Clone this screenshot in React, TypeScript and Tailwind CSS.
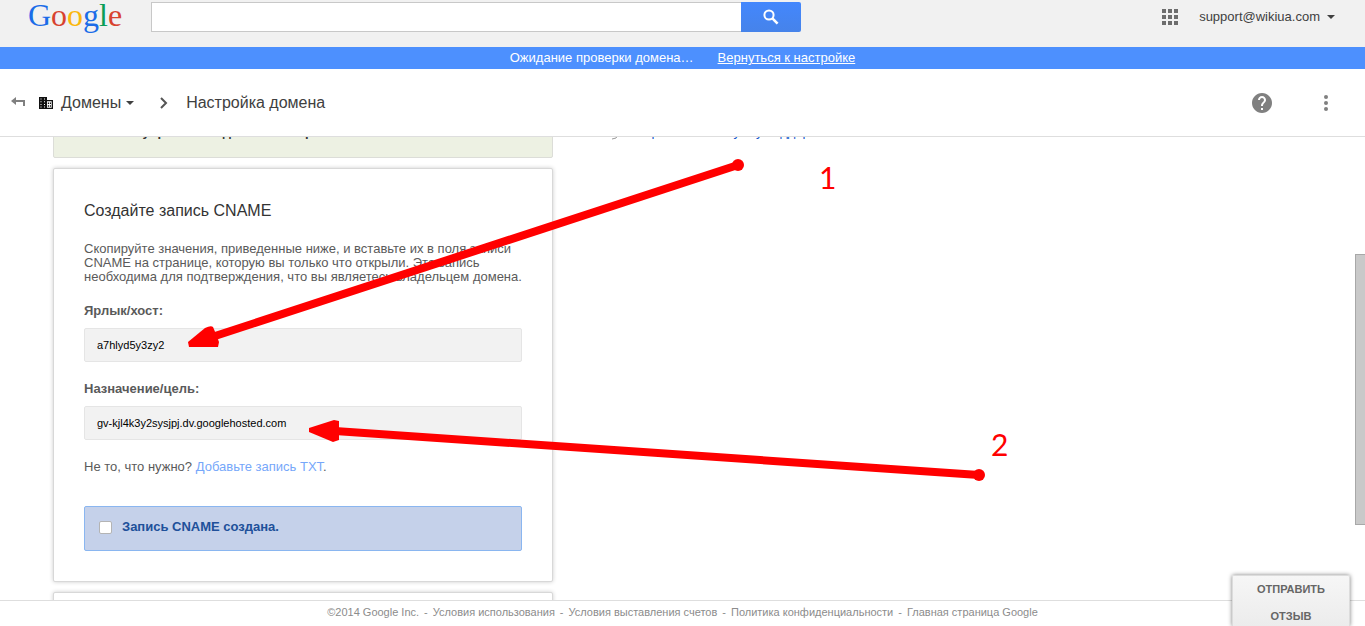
import type { ReactNode } from 'react';

const footerLinks = [
  'Условия использования',
  'Условия выставления счетов',
  'Политика конфиденциальности',
  'Главная страница Google',
];

const gridRows = [0, 6, 12];

function Caret({ className }: { className?: string }) {
  return (
    <svg width="8" height="4" viewBox="0 0 8 4" className={className} aria-hidden="true">
      <path d="M0 0h8L4 4z" fill="currentColor" />
    </svg>
  );
}

function GoogleLogo() {
  return (
    <a
      href="#"
      aria-label="Google"
      className="flex w-[123px] font-['Liberation_Serif',serif] text-[32px] leading-[26px]"
    >
      <span className="text-[#1b6ce8]">G</span>
      <span className="text-[#d8432f]">o</span>
      <span className="text-[#fbb70c]">o</span>
      <span className="text-[#1b6ce8]">g</span>
      <span className="text-[#0a9d57]">l</span>
      <span className="text-[#d8432f]">e</span>
    </a>
  );
}

function Header() {
  return (
    <header className="flex items-start bg-[#f1f1f1] pt-[2px] pr-[30px] pb-[15px] pl-7">
      <GoogleLogo />
      <form className="flex h-[30px] w-[650px]">
        <input
          type="text"
          aria-label="Поиск"
          className="min-w-0 flex-1 border border-r-0 border-[#c8c8c8] bg-white px-2 text-base outline-none"
        />
        <button
          type="button"
          aria-label="Найти"
          className="flex w-[60px] items-center justify-center rounded-r-xs bg-linear-to-b from-[#4387fd] to-[#4683ea]"
        >
          <svg width="16" height="16" viewBox="0 0 16 16" fill="none" stroke="#fff" aria-hidden="true">
            <circle cx="6" cy="6" r="4.6" strokeWidth="2" />
            <path d="M9.4 9.4l5.2 5.2" strokeWidth="2.6" />
          </svg>
        </button>
      </form>
      <div className="ml-auto flex h-[30px] items-center">
        <button type="button" aria-label="Приложения" className="mr-[21px]">
          <svg width="16" height="16" viewBox="0 0 16 16" fill="#6d6d6d" aria-hidden="true">
            {gridRows.map((y) => gridRows.map((x) => <rect key={`${x}-${y}`} x={x} y={y} width="4" height="4" />))}
          </svg>
        </button>
        <button type="button" className="flex items-center text-[13px] text-[#404040]">
          support@wikiua.com
          <Caret className="ml-[7px]" />
        </button>
      </div>
    </header>
  );
}

function Breadcrumbs() {
  return (
    <nav className="flex h-[68px] items-center border-b border-[#dedede] pr-[37px] pl-[11px] text-base text-[#404040]">
      <button type="button" aria-label="Назад">
        <svg width="14" height="12" viewBox="0 0 14 12" fill="#808080" aria-hidden="true">
          <path d="M0 4l5-4v3h9v6h-2V5H5v3z" />
        </svg>
      </button>
      <button type="button" className="ml-[14px] flex items-center">
        <svg width="14" height="12" viewBox="0 0 14 12" aria-hidden="true">
          <path d="M0 0h8v3h6v9H0z" fill="#111" />
          <path
            d="M1.5 1.5h1v1h-1zM5 1.5h1v1H5zM1.5 4.2h1v1h-1zM5 4.2h1v1H5zM1.5 7h1v1h-1zM5 7h1v1H5zM1.5 9.6h1v1h-1zM5 9.6h1v1H5zM8 4.3h4.7v6.4H8z"
            fill="#fff"
          />
          <path d="M8.8 5.6h1.4V7H8.8zM11 5.6h1V7h-1zM8.8 8.3h1.4v1.4H8.8zM11 8.3h1v1.4h-1z" fill="#111" />
        </svg>
        <span className="ml-2">Домены</span>
        <Caret className="ml-[5px]" />
      </button>
      <svg width="8" height="12" viewBox="0 0 8 12" fill="none" stroke="#555" strokeWidth="2" className="ml-[26px]" aria-hidden="true">
        <path d="M1 1l5 5-5 5" />
      </svg>
      <h1 className="ml-[18px]">Настройка домена</h1>
      <button type="button" aria-label="Справка" className="ml-auto">
        <svg width="20" height="20" viewBox="2 2 20 20" fill="#808080" aria-hidden="true">
          <path d="M12 2C6.48 2 2 6.48 2 12s4.48 10 10 10 10-4.48 10-10S17.52 2 12 2zm1 17h-2v-2h2v2zm2.07-7.75l-.9.92C13.45 12.9 13 13.5 13 15h-2v-.5c0-1.1.45-2.1 1.17-2.83l1.24-1.26c.37-.36.59-.86.59-1.41 0-1.1-.9-2-2-2s-2 .9-2 2H8c0-2.21 1.79-4 4-4s4 1.79 4 4c0 .88-.36 1.68-.93 2.25z" />
        </svg>
      </button>
      <button type="button" aria-label="Ещё" className="ml-[52px]">
        <svg width="4" height="16" viewBox="0 0 4 16" fill="#808080" aria-hidden="true">
          <circle cx="2" cy="2" r="2" />
          <circle cx="2" cy="8" r="2" />
          <circle cx="2" cy="14" r="2" />
        </svg>
      </button>
    </nav>
  );
}

function Card({ children }: { children?: ReactNode }) {
  return (
    <section className="mt-[10px] rounded-xs border border-[#d8d8d8] bg-white px-[30px] pt-[30px] pb-[30px] shadow-[0_0_4px_rgba(0,0,0,0.2)]">
      {children}
    </section>
  );
}

function RecordField({ id, label, value }: { id: string; label: string; value: string }) {
  return (
    <div className="mt-5">
      <label htmlFor={id} className="block text-[13px] leading-[14px] font-bold">
        {label}
      </label>
      <input
        id={id}
        readOnly
        value={value}
        className="mt-[10px] block h-[34px] w-full rounded-xs border border-[#e5e5e5] bg-[#f2f2f2] px-3 text-[11px] text-black outline-none"
      />
    </div>
  );
}

function Annotations() {
  return (
    <svg className="pointer-events-none absolute inset-0 h-full w-full" fill="#f00" stroke="#f00" aria-hidden="true">
      <path d="M738 165L212 337" strokeWidth="8" />
      <circle cx="738" cy="165" r="6" stroke="none" />
      <path d="M188 342l17-14q6-3 8-1l3 7 3 8-1 5h-29z" stroke="none" />
      <path d="M979 475L335 431" strokeWidth="8" />
      <circle cx="979" cy="475" r="6" stroke="none" />
      <path d="M309 428l25-8 5 1v19l-6 2-24-10z" stroke="none" />
      <g stroke="none" className="font-['Lato',sans-serif] text-[30px]">
        <text x="819" y="189">1</text>
        <text x="991" y="456">2</text>
      </g>
    </svg>
  );
}

export default function App() {
  return (
    <div className="relative flex h-screen flex-col overflow-hidden bg-white font-['Liberation_Sans',Arial,sans-serif] text-[13px] text-[#5a5a5a]">
      <Header />
      <div className="flex justify-center gap-6 bg-[#4d90fe] leading-[22px] text-white">
        <span>Ожидание проверки домена…</span>
        <a href="#" className="underline">
          Вернуться к настройке
        </a>
      </div>
      <Breadcrumbs />

      <main className="flex min-h-0 flex-1 overflow-hidden pl-[53px]">
        <div className="-mt-[43px] w-[500px] shrink-0">
          <div className="rounded-xs border border-[#dcddd8] bg-[#edf1e3] px-[30px] pt-7 pb-4 leading-[18px] font-bold text-[#333]">
            Консоль управления доменом открыта.
          </div>
          <Card>
            <h2 className="text-base leading-6 text-[#333]">Создайте запись CNAME</h2>
            <p className="mt-[19px] leading-[14px]">
              Скопируйте значения, приведенные ниже, и вставьте их в поля записи CNAME на странице, которую вы только
              что открыли. Эта запись необходима для подтверждения, что вы являетесь владельцем домена.
            </p>
            <RecordField id="host" label="Ярлык/хост:" value="a7hlyd5y3zy2" />
            <RecordField id="target" label="Назначение/цель:" value="gv-kjl4k3y2sysjpj.dv.googlehosted.com" />
            <p className="mt-5 leading-[14px]">
              Не то, что нужно?{' '}
              <a href="#" className="text-[#76a7fa]">
                Добавьте запись TXT
              </a>
              .
            </p>
            <label className="mt-8 flex h-[45px] items-center rounded-xs border border-[#8ab6f0] bg-[#c5d1ea] px-[14px] pb-[3px] font-bold text-[#20509a]">
              <input
                type="checkbox"
                className="mr-[10px] size-[13px] appearance-none rounded-xs border border-[#b4b4b4] bg-white"
              />
              Запись CNAME создана.
            </label>
          </Card>
          <Card />
        </div>
        <aside className="-mt-[43px] ml-[58px] flex items-start gap-[15px] pt-[29px] leading-[18px]">
          <svg width="8" height="18" viewBox="0 0 8 18" fill="none" stroke="#999" aria-hidden="true">
            <path d="M1 16q5 0 6-4" />
          </svg>
          <a href="#" className="text-[#15c]">
            Обратиться в службу поддержки
          </a>
        </aside>
        <div className="ml-auto flex w-[10px] flex-col">
          <div className="grow-[117]" />
          <div className="grow-[271] border border-r-0 border-[#a8a8a8] bg-[#c9c9c9]" />
          <div className="grow-[75]" />
        </div>
      </main>

      <footer className="flex justify-center gap-[5px] border-t border-[#dedede] pt-[2px] pb-[5px] text-[11px] leading-[18px] text-[#8c8c8c]">
        <span>©2014 Google Inc.</span>
        {footerLinks.map((label) => (
          <span key={label} className="flex gap-[5px]">
            <span>-</span>
            <a href="#">{label}</a>
          </span>
        ))}
      </footer>

      <button
        type="button"
        className="absolute right-[15px] bottom-0 w-[118px] rounded-t-xs border border-b-0 border-[#dcdcdc] bg-linear-to-b from-[#f6f6f6] to-[#ececec] text-[11px] leading-[27px] font-bold text-[#666] uppercase shadow-[0_0_4px_rgba(0,0,0,0.5)]"
      >
        <span className="-mb-1 block px-5">Отправить отзыв</span>
      </button>
      <Annotations />
    </div>
  );
}
